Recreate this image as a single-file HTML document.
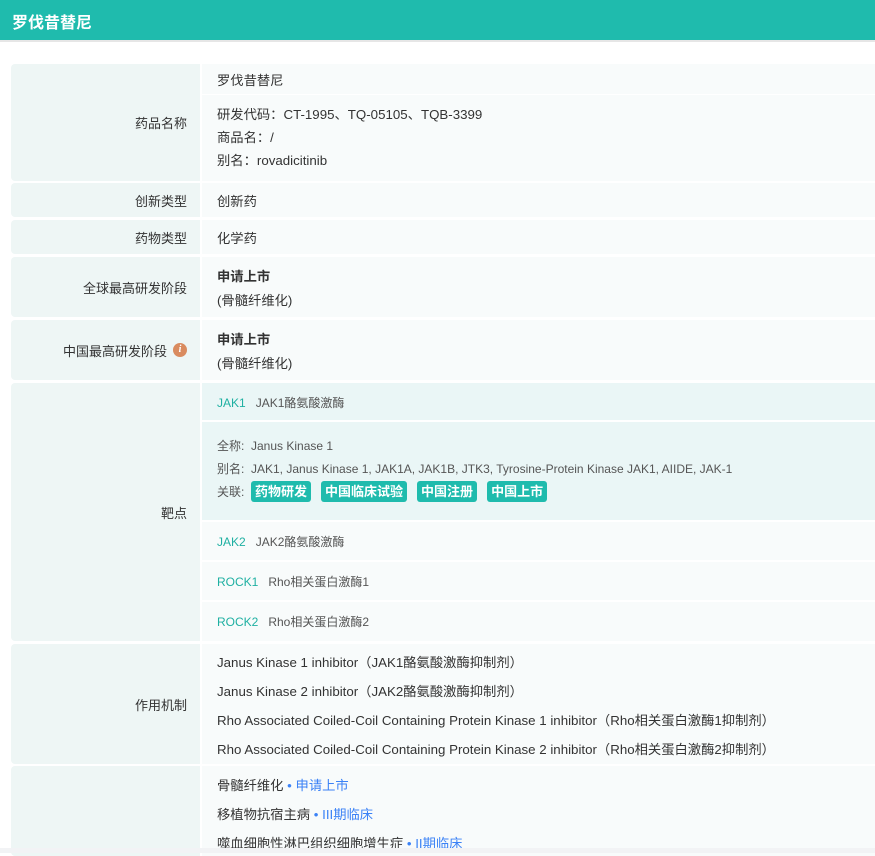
<!DOCTYPE html>
<html><head><meta charset="utf-8"><style>
*{margin:0;padding:0;box-sizing:border-box}
body{width:875px;height:853px;overflow:hidden;background:#fff;font-family:"Liberation Sans","Noto Sans CJK SC",sans-serif;font-size:13.3px;color:#333;position:relative}
.hd{position:absolute;left:0;top:0;width:875px;height:42px;background:#1fbbad;border-bottom:2px solid #e6e6e6;color:#fff;font-weight:bold;font-size:16px;padding:9px 0 0 12px}
.l{position:absolute;left:11px;width:189px;background:#eef6f5;border-radius:4px 0 0 4px;text-align:right;padding-right:13px;display:flex;align-items:center;justify-content:flex-end;font-size:13px}
.v{position:absolute;left:202px;width:673px;background:#f8fbfb;padding-left:15px}
.t{position:absolute;left:217px;white-space:nowrap}
.g{color:#1fb0a2}
.b{font-weight:bold}
.tag{display:inline-block;background:#1fbbad;color:#fff;font-weight:bold;border-radius:3px;padding:1px 4px;margin-right:10px;line-height:19px;font-size:13px}
.blue{color:#3b82f6}
.s{color:#555;font-size:12px}
</style></head><body>
<div class="hd">罗伐昔替尼</div>

<div class="l" style="top:64px;height:117px">药品名称</div>
<div class="v" style="top:64px;height:30px"></div>
<div class="v" style="top:95px;height:86px"></div>
<div class="t" style="top:70px">罗伐昔替尼</div>
<div class="t" style="top:104px">研发代码：CT-1995、TQ-05105、TQB-3399</div>
<div class="t" style="top:127px">商品名：/</div>
<div class="t" style="top:150px">别名：rovadicitinib</div>

<div class="l" style="top:183px;height:34px">创新类型</div>
<div class="v" style="top:183px;height:34px"></div>
<div class="t" style="top:191px">创新药</div>

<div class="l" style="top:220px;height:34px">药物类型</div>
<div class="v" style="top:220px;height:34px"></div>
<div class="t" style="top:228px">化学药</div>

<div class="l" style="top:257px;height:60px">全球最高研发阶段</div>
<div class="v" style="top:257px;height:60px"></div>
<div class="t b" style="top:266px">申请上市</div>
<div class="t" style="top:290px">(骨髓纤维化)</div>

<div class="l" style="top:320px;height:60px">中国最高研发阶段<span style="display:inline-block;width:14px;height:14px;border-radius:50%;background:#d98b5f;color:#fff;font-size:10px;font-style:italic;text-align:center;line-height:14px;margin-left:6px;font-family:'Liberation Serif',serif;font-weight:bold">i</span></div>
<div class="v" style="top:320px;height:60px"></div>
<div class="t b" style="top:329px">申请上市</div>
<div class="t" style="top:353px">(骨髓纤维化)</div>

<div class="l" style="top:383px;height:258px">靶点</div>
<div class="v" style="top:383px;height:37px;background:#eaf6f6"></div>
<div class="v" style="top:422px;height:98px;background:#eaf6f6"></div>
<div class="v" style="top:522px;height:38px"></div>
<div class="v" style="top:562px;height:38px"></div>
<div class="v" style="top:602px;height:39px"></div>
<div class="t s" style="top:394px"><span class="g">JAK1</span>&nbsp;&nbsp;&nbsp;JAK1酪氨酸激酶</div>
<div class="t s" style="top:437px">全称:&nbsp;&nbsp;Janus Kinase 1</div>
<div class="t s" style="top:460px">别名:&nbsp;&nbsp;JAK1, Janus Kinase 1, JAK1A, JAK1B, JTK3, Tyrosine-Protein Kinase JAK1, AIIDE, JAK-1</div>
<div class="t s" style="top:481px">关联:&nbsp;&nbsp;<span class="tag">药物研发</span><span class="tag">中国临床试验</span><span class="tag">中国注册</span><span class="tag">中国上市</span></div>
<div class="t s" style="top:533px"><span class="g">JAK2</span>&nbsp;&nbsp;&nbsp;JAK2酪氨酸激酶</div>
<div class="t s" style="top:573px"><span class="g">ROCK1</span>&nbsp;&nbsp;&nbsp;Rho相关蛋白激酶1</div>
<div class="t s" style="top:613px"><span class="g">ROCK2</span>&nbsp;&nbsp;&nbsp;Rho相关蛋白激酶2</div>

<div class="l" style="top:644px;height:120px">作用机制</div>
<div class="v" style="top:644px;height:120px"></div>
<div class="t" style="top:652px">Janus Kinase 1 inhibitor（JAK1酪氨酸激酶抑制剂）</div>
<div class="t" style="top:681px">Janus Kinase 2 inhibitor（JAK2酪氨酸激酶抑制剂）</div>
<div class="t" style="top:710px">Rho Associated Coiled-Coil Containing Protein Kinase 1 inhibitor（Rho相关蛋白激酶1抑制剂）</div>
<div class="t" style="top:739px">Rho Associated Coiled-Coil Containing Protein Kinase 2 inhibitor（Rho相关蛋白激酶2抑制剂）</div>

<div class="l" style="top:766px;height:90px"></div>
<div class="v" style="top:766px;height:90px"></div>
<div class="t" style="top:775px">骨髓纤维化<span class="blue"> • 申请上市</span></div>
<div class="t" style="top:804px">移植物抗宿主病<span class="blue"> • III期临床</span></div>
<div class="t" style="top:833px">噬血细胞性淋巴组织细胞增生症<span class="blue"> • II期临床</span></div>
<div style="position:absolute;left:0;top:848px;width:875px;height:5px;background:#f2f3f5"></div>
</body></html>
